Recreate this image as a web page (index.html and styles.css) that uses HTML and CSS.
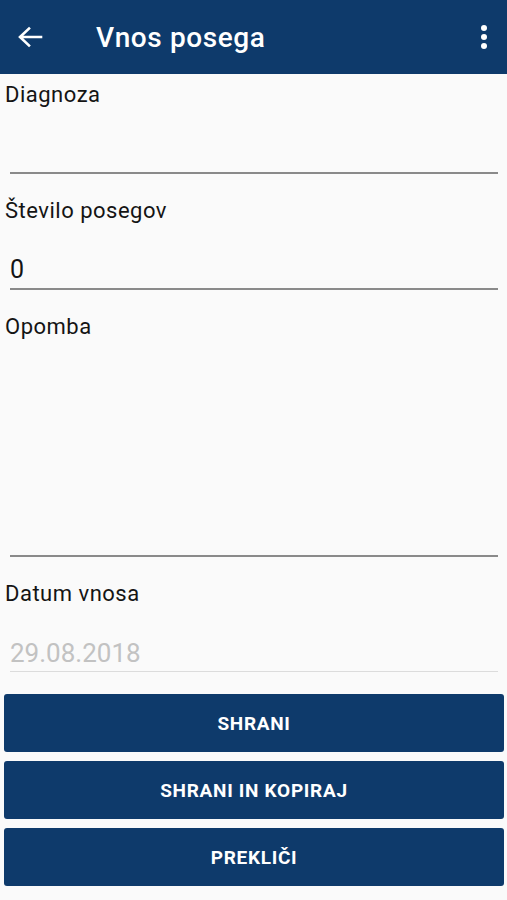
FILE: index.html
```html
<!DOCTYPE html>
<html lang="sl">
<head>
<meta charset="utf-8">
<link rel="stylesheet" href="styles.css">
</head>
<body>
<header class="appbar">
  <svg class="back" width="26" height="22" viewBox="0 0 26 22"><path d="M24 11H4M12 2.5L3 11l9 8.5" fill="none" stroke="#fff" stroke-width="2.6" stroke-linecap="square"/></svg>
  <h1 class="title">Vnos posega</h1>
  <svg class="more" width="8" height="26" viewBox="0 0 8 26"><circle cx="4" cy="4" r="3" fill="#fff"/><circle cx="4" cy="13" r="3" fill="#fff"/><circle cx="4" cy="22" r="3" fill="#fff"/></svg>
</header>
<main class="form">
  <div class="field">
    <div class="label">Diagnoza</div>
    <div class="input"><span class="value"></span></div>
  </div>
  <div class="field">
    <div class="label">Število posegov</div>
    <div class="input"><span class="value">0</span></div>
  </div>
  <div class="field">
    <div class="label">Opomba</div>
    <div class="input tall"><span class="value"></span></div>
  </div>
  <div class="field">
    <div class="label">Datum vnosa</div>
    <div class="input disabled"><span class="value">29.08.2018</span></div>
  </div>
  <div class="buttons">
    <button class="btn">SHRANI</button>
    <button class="btn">SHRANI IN KOPIRAJ</button>
    <button class="btn">PREKLIČI</button>
  </div>
</main>
</body>
</html>
```
FILE: styles.css
```css
* { box-sizing: border-box; }
html, body { margin: 0; padding: 0; }
body {
  background: #fafafa;
  font-family: Roboto, "Liberation Sans", sans-serif;
  color: #141414;
  width: 507px;
  height: 900px;
  overflow: hidden;
}
.appbar {
  height: 74px;
  background: #0e3a6b;
  display: flex;
  align-items: center;
  padding: 0 19px 0 17px;
}
.title {
  margin: 0 0 0 53px;
  font-size: 28px;
  font-weight: 500;
  color: #fff;
  flex: 1;
  letter-spacing: 0.6px;
}
.form {
  padding: 9px 9px 0 4px;
  display: flex;
  flex-direction: column;
}
.field { margin-bottom: 25px; }
.label {
  font-size: 22px;
  line-height: 24px;
  padding-left: 1px;
  letter-spacing: 0.5px;
  color: #141414;
}
.input {
  margin: 33px 0 0 6px;
  border-bottom: 2px solid #8a8a8a;
  padding-bottom: 4px;
  height: 34px;
}
.input.tall { height: 185px; }
.input.disabled {
  border-bottom: 1px solid #dcdcdc;
  height: 33px;
}
.value {
  display: block;
  font-size: 25px;
  line-height: 28px;
  height: 28px;
  color: #141414;
}
.disabled .value { font-size: 26px; color: #c2c2c2; }
.buttons {
  margin: -3px -5px 0 0;
  display: flex;
  flex-direction: column;
  gap: 9px;
}
.btn {
  height: 58px;
  width: 500px;
  border: none;
  border-radius: 3px;
  background: #0e3a6b;
  color: #fff;
  font-family: Roboto, "Liberation Sans", sans-serif;
  font-weight: 700;
  font-size: 19px;
  letter-spacing: 0.7px;
  padding: 0;
}
```
